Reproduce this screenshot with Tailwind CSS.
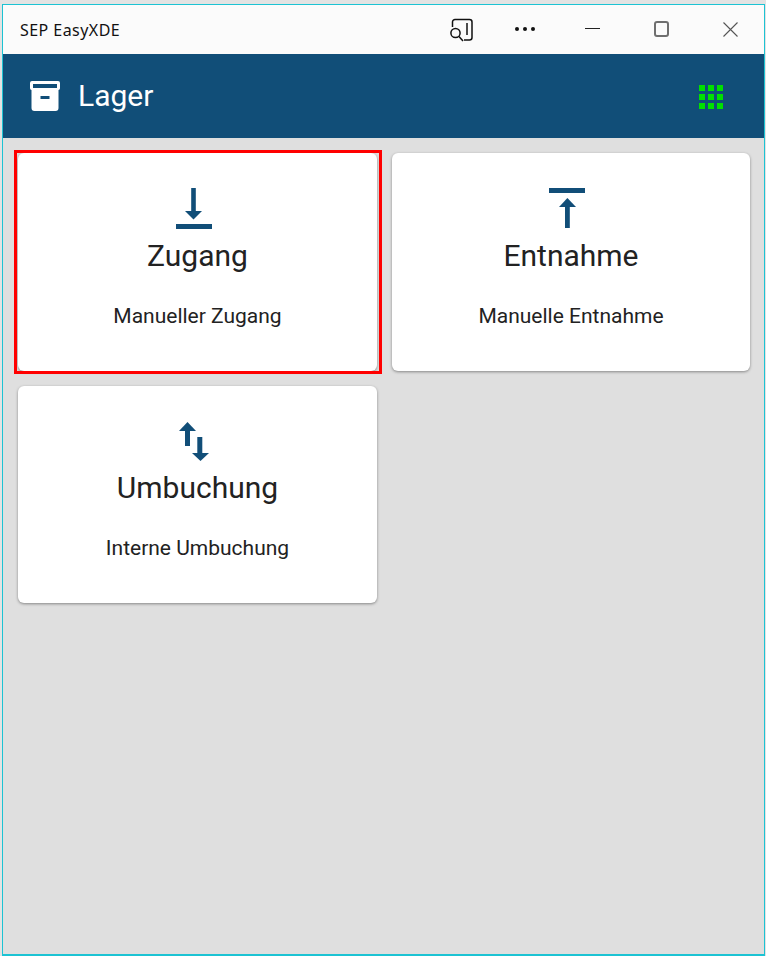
<!DOCTYPE html>
<html lang="en">
<head>
    <meta charset="UTF-8" />
    <meta name="viewport" content="width=device-width, initial-scale=1.0" />
    <title>SEP EasyXDE</title>
    <script src="https://cdn.jsdelivr.net/npm/@tailwindcss/browser@4"></script>
</head>
<body class="bg-[#e3e3e3] font-['Roboto',sans-serif] overflow-hidden">
    <div class="h-[956px] w-[766px] pt-1 pl-[2px] pr-[1px]">
        <div class="h-full flex flex-col border-t border-l border-r border-b-2 border-[#1cc3d3] bg-[#dfdfdf]">
            <!-- Title bar -->
            <div class="h-[49px] shrink-0 bg-[#fbfbfb] flex items-center text-black relative">
                <span class="ml-[17px] text-[16px] tracking-[0.45px] text-[#111] font-['Noto_Sans',sans-serif]">SEP EasyXDE</span>
                <svg class="absolute left-[447px] top-[13px]" width="24" height="24" viewBox="0 0 24 24" fill="none" stroke="#111" stroke-width="1.5">
                    <path d="M2.5 9V4A2.5 2.5 0 0 1 5 1.5H19.5A2.5 2.5 0 0 1 22 4V19.5A2.5 2.5 0 0 1 19.5 22H14" />
                    <path d="M17 5V17" />
                    <circle cx="5.5" cy="15" r="4.6" />
                    <path d="M9 18.5L13 23" />
                </svg>
                <div class="absolute left-[512px] top-[22px] flex gap-1">
                    <span class="w-1 h-1 rounded-full bg-[#111]"></span>
                    <span class="w-1 h-1 rounded-full bg-[#111]"></span>
                    <span class="w-1 h-1 rounded-full bg-[#111]"></span>
                </div>
                <div class="absolute left-[582px] top-[23px] w-[15px] h-[1px] bg-[#222]"></div>
                <div class="absolute left-[651px] top-[16px] w-[15px] h-[16px] border-2 border-[#6f6f6f] rounded-[3px]"></div>
                <svg class="absolute left-[720px] top-[17px]" width="15" height="15" viewBox="0 0 15 15" fill="none" stroke="#555" stroke-width="1.1">
                    <path d="M0.5 0.5L14.5 14.5M14.5 0.5L0.5 14.5" />
                </svg>
            </div>
            <!-- App header -->
            <div class="h-[84px] shrink-0 bg-[#114e78] flex items-center justify-between pl-[27px] pr-[40px]">
                <div class="flex items-center gap-[18px]">
                    <svg width="30" height="30" viewBox="0 0 30 30" class="mt-[-1px]">
                        <path fill="#fff" fill-rule="evenodd" d="M2 0H28A2 2 0 0 1 30 2V7A2 2 0 0 1 28.5 9V27A3 3 0 0 1 25.5 30H4.5A3 3 0 0 1 1.5 27V9A2 2 0 0 1 0 7V2A2 2 0 0 1 2 0ZM3 3V7H27V3ZM10.5 15V18H19.5V15Z" />
                    </svg>
                    <span class="text-[30px] leading-none text-white">Lager</span>
                </div>
                <div class="grid grid-cols-3 gap-[3px] mt-[2px] mr-[1px]">
                    <span class="w-[6px] h-[6px] bg-[#00e000]"></span>
                    <span class="w-[6px] h-[6px] bg-[#00e000]"></span>
                    <span class="w-[6px] h-[6px] bg-[#00e000]"></span>
                    <span class="w-[6px] h-[6px] bg-[#00e000]"></span>
                    <span class="w-[6px] h-[6px] bg-[#00e000]"></span>
                    <span class="w-[6px] h-[6px] bg-[#00e000]"></span>
                    <span class="w-[6px] h-[6px] bg-[#00e000]"></span>
                    <span class="w-[6px] h-[6px] bg-[#00e000]"></span>
                    <span class="w-[6px] h-[6px] bg-[#00e000]"></span>
                </div>
            </div>
            <!-- Tiles -->
            <div class="grid grid-cols-[359px_358px] gap-x-[15px] gap-y-[15px] pl-[15px] pt-[15px] content-start">
                <div class="relative h-[218px] bg-white rounded-[6px] shadow-[0_1px_3px_rgba(0,0,0,0.4)] flex flex-col items-center text-[#222]">
                    <svg class="mt-[34px] ml-[-7px] shrink-0" width="36" height="42" viewBox="0 0 36 42" fill="#114e78">
                        <rect x="0" y="37" width="36" height="5" />
                        <rect x="15.2" y="1" width="4.6" height="27" />
                        <path d="M9 24H26L17.5 32.5Z" />
                    </svg>
                    <div class="text-[30px] leading-[34px] mt-[10px]">Zugang</div>
                    <div class="text-[21px] leading-[24px] mt-[31px]">Manueller Zugang</div>
                    <!-- selection frame -->
                    <div class="absolute left-[-4px] right-[-5px] top-[-3px] bottom-[-3px] border-[3px] border-[#ff0000]"></div>
                </div>
                <div class="h-[218px] bg-white rounded-[6px] shadow-[0_1px_3px_rgba(0,0,0,0.4)] flex flex-col items-center text-[#222]">
                    <svg class="mt-[34px] ml-[-8px] shrink-0" width="36" height="42" viewBox="0 0 36 42" fill="#114e78">
                        <rect x="0" y="1" width="36" height="5" />
                        <rect x="16" y="17" width="4.8" height="24" />
                        <path d="M10 20H27L18.4 11Z" />
                    </svg>
                    <div class="text-[30px] leading-[34px] mt-[10px]">Entnahme</div>
                    <div class="text-[21px] leading-[24px] mt-[31px]">Manuelle Entnahme</div>
                </div>
                <div class="h-[217px] bg-white rounded-[6px] shadow-[0_1px_3px_rgba(0,0,0,0.4)] flex flex-col items-center text-[#222]">
                    <svg class="mt-[34px] ml-[-7px] shrink-0" width="36" height="42" viewBox="0 0 36 42" fill="#114e78">
                        <rect x="9" y="9" width="5" height="17" />
                        <path d="M3 11H20L11.5 2Z" />
                        <rect x="21.3" y="17" width="5" height="18" />
                        <path d="M16 33H33L24.5 41Z" />
                    </svg>
                    <div class="text-[30px] leading-[34px] mt-[9px]">Umbuchung</div>
                    <div class="text-[21px] leading-[24px] mt-[31px]">Interne Umbuchung</div>
                </div>
            </div>
        </div>
    </div>
</body>
</html>
